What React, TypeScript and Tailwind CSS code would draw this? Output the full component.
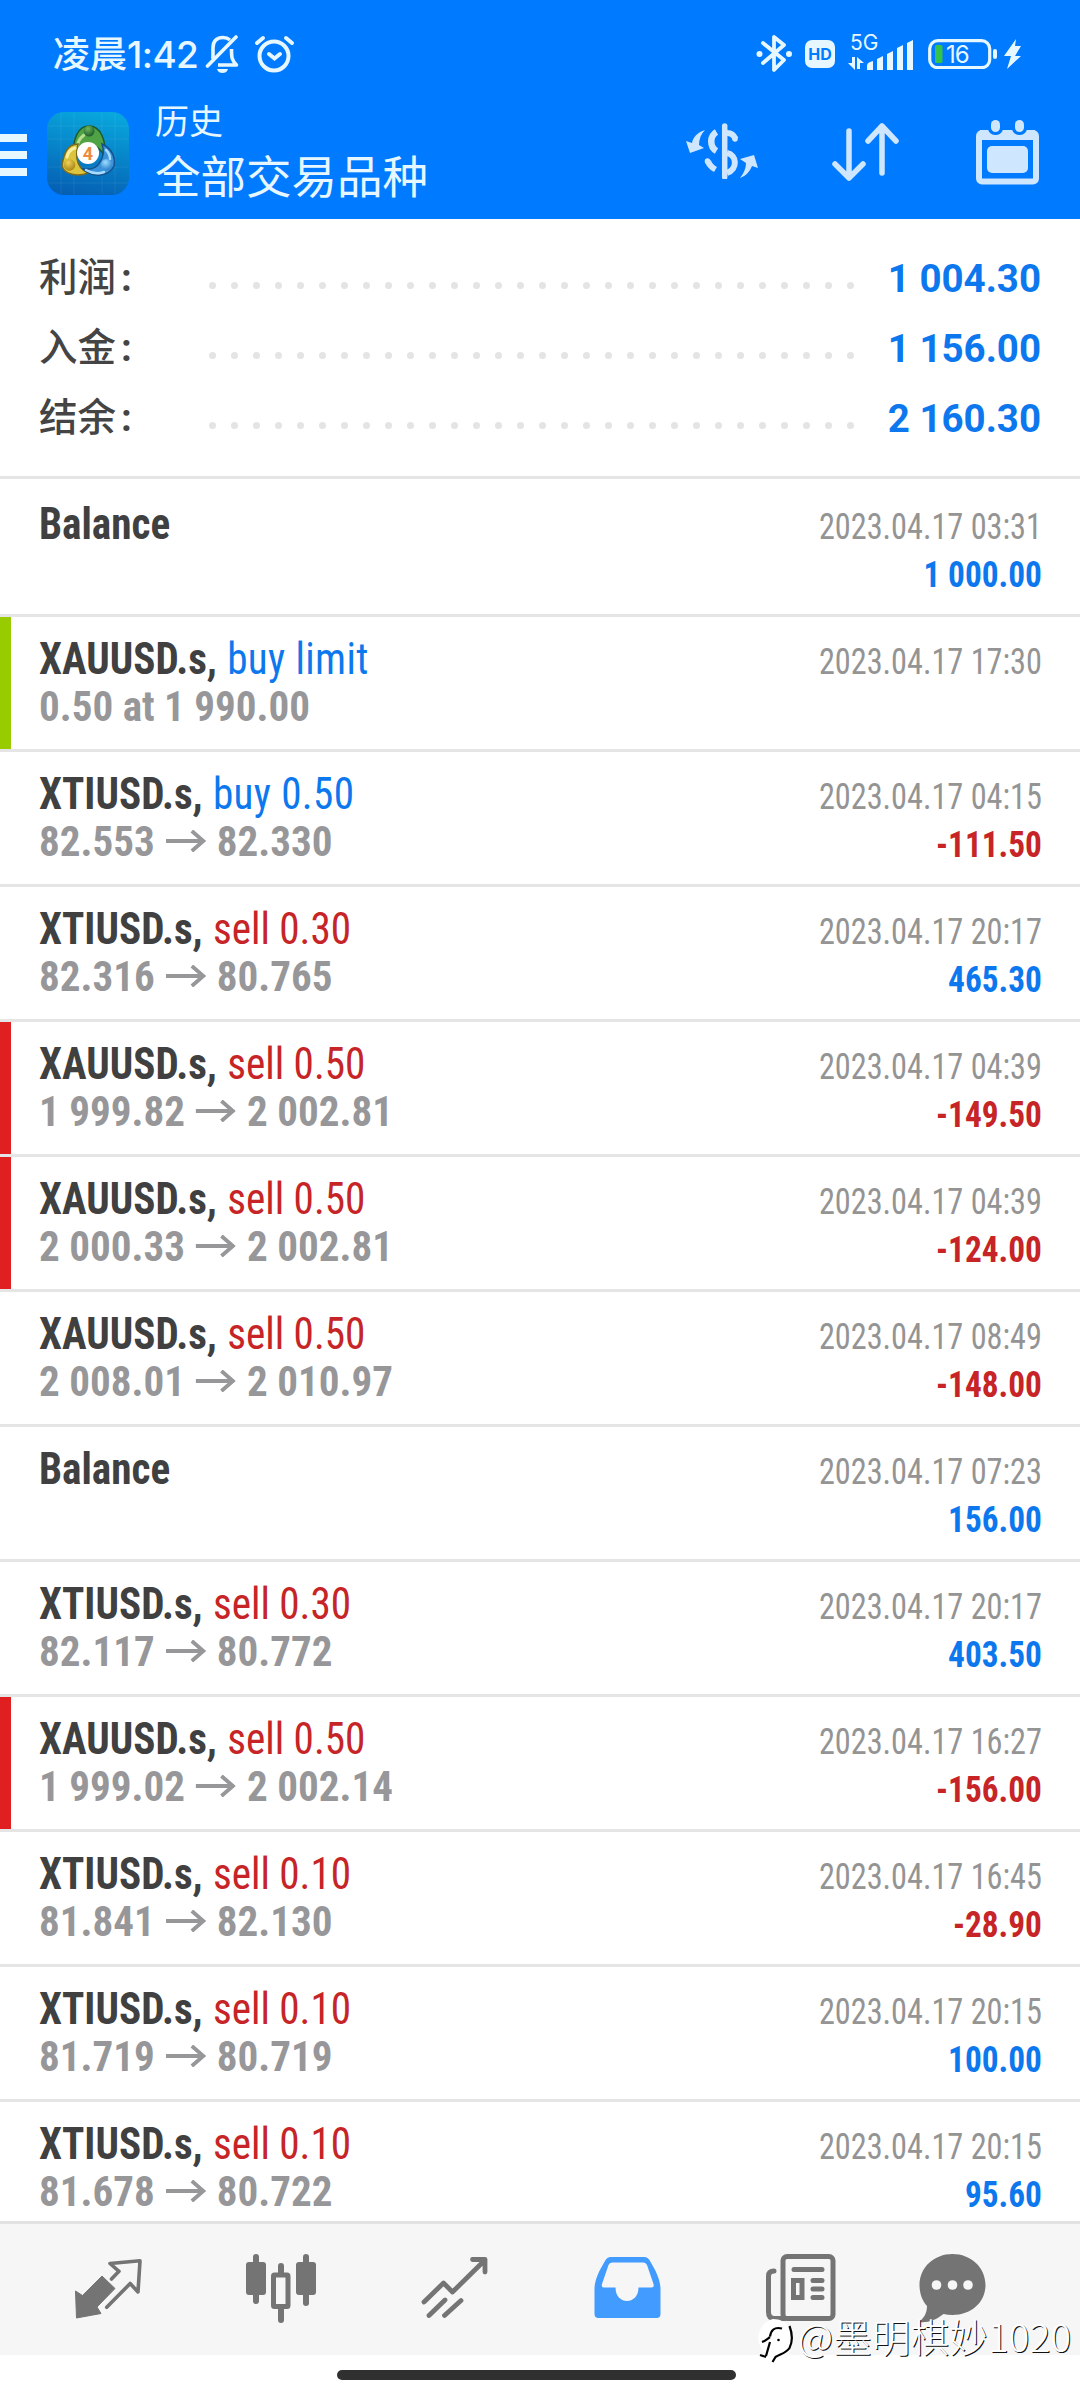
interface Deal {
  title: string;
  action?: string;
  side?: "buy" | "sell";
  detail?: string[];
  time: string;
  amount?: string;
  mark?: "tp" | "sl";
}

const summary = [
  { label: "利润", value: "1 004.30" },
  { label: "入金", value: "1 156.00" },
  { label: "结余", value: "2 160.30" },
];

const deals: Deal[] = [
  { title: "Balance", time: "2023.04.17 03:31", amount: "1 000.00" },
  { title: "XAUUSD.s,", action: "buy limit", side: "buy", detail: ["0.50 at 1 990.00"], time: "2023.04.17 17:30", mark: "tp" },
  { title: "XTIUSD.s,", action: "buy 0.50", side: "buy", detail: ["82.553", "82.330"], time: "2023.04.17 04:15", amount: "-111.50" },
  { title: "XTIUSD.s,", action: "sell 0.30", side: "sell", detail: ["82.316", "80.765"], time: "2023.04.17 20:17", amount: "465.30" },
  { title: "XAUUSD.s,", action: "sell 0.50", side: "sell", detail: ["1 999.82", "2 002.81"], time: "2023.04.17 04:39", amount: "-149.50", mark: "sl" },
  { title: "XAUUSD.s,", action: "sell 0.50", side: "sell", detail: ["2 000.33", "2 002.81"], time: "2023.04.17 04:39", amount: "-124.00", mark: "sl" },
  { title: "XAUUSD.s,", action: "sell 0.50", side: "sell", detail: ["2 008.01", "2 010.97"], time: "2023.04.17 08:49", amount: "-148.00" },
  { title: "Balance", time: "2023.04.17 07:23", amount: "156.00" },
  { title: "XTIUSD.s,", action: "sell 0.30", side: "sell", detail: ["82.117", "80.772"], time: "2023.04.17 20:17", amount: "403.50" },
  { title: "XAUUSD.s,", action: "sell 0.50", side: "sell", detail: ["1 999.02", "2 002.14"], time: "2023.04.17 16:27", amount: "-156.00", mark: "sl" },
  { title: "XTIUSD.s,", action: "sell 0.10", side: "sell", detail: ["81.841", "82.130"], time: "2023.04.17 16:45", amount: "-28.90" },
  { title: "XTIUSD.s,", action: "sell 0.10", side: "sell", detail: ["81.719", "80.719"], time: "2023.04.17 20:15", amount: "100.00" },
  { title: "XTIUSD.s,", action: "sell 0.10", side: "sell", detail: ["81.678", "80.722"], time: "2023.04.17 20:15", amount: "95.60" },
];

function StatusBar() {
  return (
    <div className="flex h-[108px] items-start pt-[33px] pl-[53px] text-[#e6f7ff]">
      <span className="mt-[-1px] w-[145px] text-[37px] leading-[40px] font-medium whitespace-nowrap">
        凌晨<span className="font-['Inter'] tracking-[-0.6px]">1:42</span>
      </span>
      <svg className="ml-[7px] h-[41px] w-[36px]" viewBox="0 0 36 41" fill="none" stroke="currentColor" strokeWidth="3.6">
        <path d="M2.500 33 31 4" strokeLinecap="round" />
        <path d="M8 26V15C8 8 12 4.500 18 4.500c3 0 5 .8 7 2.500M26.500 16c0 8 0 11 5 16H13" strokeLinejoin="round" />
        <path d="M12 36h11c-1 3-3 4-5.500 4S13 39 12 36Z" fill="currentColor" stroke="none" />
      </svg>
      <svg className="ml-[13px] h-[41px] w-[41px]" viewBox="0 0 41 41" fill="none" stroke="currentColor" strokeWidth="4" strokeLinecap="round">
        <circle cx="20" cy="23" r="14.500" />
        <path d="m15 21 5.500 4.500L26 21M3 10l6-5M38 10l-6-5" />
      </svg>
      <svg className="ml-[461px] h-[41px] w-[37px]" viewBox="0 0 37 41" fill="none" stroke="currentColor" strokeWidth="3.8" strokeLinejoin="round" strokeLinecap="round">
        <path d="M7 10l21 17-10 10V4l10 8L7 30" />
        <circle cx="3.500" cy="21" r="3" fill="currentColor" stroke="none" />
        <circle cx="33" cy="21" r="3" fill="currentColor" stroke="none" />
      </svg>
      <span className="mt-[7px] ml-[12px] flex h-[28px] w-[30px] items-center justify-center rounded-[7px] bg-[#e6f7ff] font-['Inter'] text-[16px] font-bold text-[#007aff]">
        HD
      </span>
      <div className="ml-[13px] flex w-[66px] flex-col">
        <span className="ml-[2px] h-[6px] font-['Inter'] text-[21px] leading-[34px]">
          <span className="block h-0 leading-[20px]">5G</span>
        </span>
        <svg className="h-[31px] w-[66px]" viewBox="0 0 66 31" fill="currentColor">
          <path d="M19 31v-4q0-3 3-4l3-1v9ZM29 31V20l6-3v14ZM39 31V15l6-3v19ZM49 31V9l6-3v25ZM59 31V4l6-3v30Z" />
          <path d="M4 18h3v13L0 24h4ZM9 30V18l7 6h-4v6Z" />
        </svg>
      </div>
      <svg className="mt-[6px] ml-[14px] h-[30px] w-[95px]" viewBox="0 0 95 30">
        <rect x="1.700" y="1.700" width="60" height="27" rx="8" fill="none" stroke="currentColor" strokeWidth="3.200" />
        <rect x="7" y="6" width="7.500" height="18" rx="1.500" fill="#35c24a" />
        <rect x="65" y="10" width="4" height="10" rx="2" fill="currentColor" />
        <text x="18" y="24" fontSize="24" fontFamily="Inter" fill="currentColor" letterSpacing="-1">16</text>
        <path d="M88 0 76 17h7l-4 13 14-13h-6l6-10h-6Z" fill="currentColor" />
      </svg>
    </div>
  );
}

function AppLogo() {
  return (
    <svg className="h-[83px] w-[82px]" viewBox="0 0 82 83">
      <defs>
        <linearGradient id="tile" x1="0.6" y1="0" x2="0.4" y2="1">
          <stop offset="0" stopColor="#08a6dc" />
          <stop offset="1" stopColor="#0560b4" />
        </linearGradient>
        <radialGradient id="greenHead" cx="0.4" cy="0.3" r="0.7">
          <stop offset="0" stopColor="#6fb65c" />
          <stop offset="1" stopColor="#1c5f2b" />
        </radialGradient>
        <radialGradient id="yellowHead" cx="0.4" cy="0.3" r="0.7">
          <stop offset="0" stopColor="#f0d45a" />
          <stop offset="1" stopColor="#a88414" />
        </radialGradient>
        <radialGradient id="blueHead" cx="0.4" cy="0.3" r="0.7">
          <stop offset="0" stopColor="#9edcff" />
          <stop offset="1" stopColor="#2e86cf" />
        </radialGradient>
      </defs>
      <rect width="82" height="83" rx="17" fill="url(#tile)" />
      <path d="M14 1v81M27 1v81M55 1v81M68 1v81M1 14h80M1 27h80M1 55h80M1 71h80" stroke="#fff" strokeOpacity=".07" />
      {/* three figures around the badge */}
      <path d="M27 43C25 28 31 14 42 14s18 14 15 30c-3-7-8-11-15-11s-12 4-15 10Z" fill="#4fa345" stroke="#1d5a2b" strokeWidth="1.5" />
      <path d="M30 37c0-7 3-11 7-14" fill="none" stroke="#b7dd8e" strokeWidth="3" strokeLinecap="round" />
      <path d="M31 32C20 32 17 42 15 53c1 10 17 12 26 8-7-3-10-8-11-14-1-5 0-10 1-15Z" fill="#dcc53c" stroke="#7a6a1c" strokeWidth="1.5" />
      <path d="M20 45c1-5 4-8 8-9" fill="none" stroke="#f8efa0" strokeWidth="3" strokeLinecap="round" />
      <path d="M55 32c9 4 14 13 12 22-5 10-20 13-31 3 8 1 14-1 17-7 4-6 4-12 2-18Z" fill="#3a92dc" stroke="#15518c" strokeWidth="1.5" />
      <path d="M39 58c7 4 13 4 18 2M59 38c3 3 4 6 4 9" fill="none" stroke="#a8dcff" strokeWidth="2.5" strokeLinecap="round" />
      <circle cx="42" cy="19" r="5.500" fill="url(#greenHead)" />
      <circle cx="22.500" cy="53" r="5.800" fill="url(#yellowHead)" />
      <circle cx="59.500" cy="52.500" r="5.500" fill="url(#blueHead)" />
      <circle cx="41" cy="41" r="11" fill="#fff" />
      <text x="41" y="47.500" fontSize="18" fontWeight="700" fontFamily="Roboto" textAnchor="middle" fill="#ee8a3c">4</text>
    </svg>
  );
}

function Toolbar() {
  return (
    <div className="flex h-[111px] text-[#cfe6ff]">
      <div className="mt-[26px] flex w-[27px] flex-col gap-[9px]">
        <span className="h-[8px] bg-[#e6f7ff]" />
        <span className="h-[8px] bg-[#e6f7ff]" />
        <span className="h-[8px] bg-[#e6f7ff]" />
      </div>
      <div className="mt-[4px] ml-[20px]">
        <AppLogo />
      </div>
      <div className="ml-[26px] w-[531px] text-[#e6f7ff]">
        <div className="mt-[-9px] text-[34px] leading-[42px]">历史</div>
        <div className="mt-[4px] text-[45.5px] leading-[58px]">全部交易品种</div>
      </div>
      <svg className="mt-[15px] h-[56px] w-[72px]" viewBox="0 0 72 56" fill="currentColor">
        <path d="M19 7C12 9 7 14 6 20l-6-2 4 12 14-5-5-3c0-6 2-11 6-15ZM54 55c6-2 10-7 12-12l6 2-4-13-14 4 6 4c0 5-2 10-6 15Z" />
        <g fill="none" stroke="currentColor">
          <path d="M38.700 3v51" strokeWidth="5.500" strokeLinecap="round" />
          <path d="M41 10c4 0 7 2 8.500 6M41 30c10 2 11 16 0 20M22 38c1 4 3 6 7.500 8.500" strokeWidth="6" />
          <path d="M30.500 9c-7 4-7 15 0 19" strokeWidth="6.500" />
          <path d="M49 15v1M21.500 38v.5" strokeWidth="5.500" strokeLinecap="round" />
        </g>
      </svg>
      <svg className="mt-[15px] ml-[74px] h-[59px] w-[67px]" viewBox="0 0 67 59" fill="none" stroke="currentColor" strokeWidth="5.5" strokeLinecap="round" strokeLinejoin="round">
        <path d="M17 8v47M3 41l14 14 14-14M50 50V3M36 18 50 3l14 15" />
      </svg>
      <svg className="mt-[12px] ml-[77px] h-[65px] w-[63px]" viewBox="0 0 63 65" fill="currentColor">
        <rect x="3" y="13" width="57" height="48.500" rx="3" fill="none" stroke="currentColor" strokeWidth="6" />
        <path d="M4 10h55v10H4Z" />
        <rect x="11" y="26" width="41" height="27" rx="5" />
        <rect x="12" y="-3" width="15" height="18" rx="7" fill="#007aff" />
        <rect x="36" y="-3" width="15" height="18" rx="7" fill="#007aff" />
        <rect x="15" y="0" width="9" height="12" rx="4.500" />
        <rect x="39" y="0" width="9" height="12" rx="4.500" />
      </svg>
    </div>
  );
}

function SummaryRow({ label, value }: { label: string; value: string }) {
  return (
    <div className="flex h-[70px] items-center">
      <span className="w-[170px] pb-[4px] text-[38.5px] font-medium text-[#444444]">
        {label}
        <span className="ml-[5px] font-['Roboto'] font-bold">:</span>
      </span>
      <div className="flex w-[645px] justify-between pt-[14px]">
        {Array.from({ length: 30 }, (_, i) => (
          <span key={i} className="h-[7px] w-[7px] rounded-full bg-[#e4e4e4]" />
        ))}
      </div>
      <span className="ml-auto pt-[2px] font-['Roboto'] text-[38.5px] font-bold text-[#0d78ee]">{value}</span>
    </div>
  );
}

function Arrow() {
  return (
    <svg className="mx-[11.5px] h-[22px] w-[42px]" viewBox="0 0 42 22" fill="none" stroke="currentColor" strokeWidth="4">
      <path d="M0 11h39M27 1l12 10-12 10" />
    </svg>
  );
}

function DealRow({ deal, first }: { deal: Deal; first: boolean }) {
  return (
    <div className={`flex border-b-[3px] border-[#e5e5e5] font-['Roboto_Condensed','Roboto'] ${first ? "h-[138px] pt-[3px]" : "h-[135px]"}`}>
      <div
        className={`w-[11px] ${deal.mark === "tp" ? "bg-[#99cc00]" : ""} ${deal.mark === "sl" ? "bg-[#e02020]" : ""}`}
      />
      <div className="flex flex-1 justify-between pt-[18px] pr-[38px] pl-[28px]">
        <div className="text-[44px] leading-[48px] font-bold">
          <div className="origin-left scale-x-[0.935] text-[#404040]">
            {deal.title}
            {deal.action && (
              <span
                className={`ml-[11px] font-normal ${deal.side === "buy" ? "tracking-[0.4px] text-[#0d78ee]" : "text-[#c62426]"}`}
              >
                {deal.action}
              </span>
            )}
          </div>
          {deal.detail && (
            <div className="mt-[-1px] flex origin-left scale-x-[0.955] items-center text-[43px] text-[#97979a]">
              {deal.detail[0]}
              {deal.detail[1] && <Arrow />}
              {deal.detail[1]}
            </div>
          )}
        </div>
        <div className="pt-[3px] text-right text-[36px] leading-[48px]">
          <div className="origin-right scale-x-[0.896] text-[#949494]">{deal.time}</div>
          {deal.amount && (
            <div
              className={`origin-right scale-x-[0.925] font-bold ${deal.amount.startsWith("-") ? "text-[#c62426]" : "text-[#0d78ee]"}`}
            >
              {deal.amount}
            </div>
          )}
        </div>
      </div>
    </div>
  );
}

function TabBar() {
  return (
    <div className="flex h-[134px] shrink-0 items-start border-t-[3px] border-[#e2e2e2] bg-[#f6f6f6] pt-[30px] pl-[75px] text-[#747474]">
      {/* quotes */}
      <svg className="mt-[4px] h-[62px] w-[68px]" viewBox="0 0 68 62">
        <path d="M27 18 40 30.500 22 49l4 6.500L1.500 60 .5 33l7 4.500Z" fill="currentColor" stroke="currentColor" strokeLinejoin="round" />
        <path d="M36.500 21 44 13.300 35 5.500l30-2.700-2 31.200-7.800-8.500L31.700 49.300" fill="none" stroke="currentColor" strokeWidth="3.6" strokeLinecap="round" strokeLinejoin="round" />
      </svg>
      {/* charts */}
      <svg className="ml-[103px] h-[70px] w-[70px]" viewBox="0 0 70 70" fill="currentColor">
        <rect y="8" width="20" height="33" rx="3" />
        <rect x="7" width="6" height="50" rx="3" />
        <rect x="50" y="8" width="20" height="33" rx="3" />
        <rect x="57" width="6" height="52" rx="3" />
        <rect x="27.500" y="21" width="14.500" height="31.500" rx="1" fill="none" stroke="currentColor" strokeWidth="5" />
        <path d="M35 12v8M35 54v12" stroke="currentColor" strokeWidth="6" strokeLinecap="round" />
      </svg>
      {/* trade */}
      <svg className="mt-[2px] ml-[105px] h-[63px] w-[68px]" viewBox="0 0 68 63" fill="none" stroke="currentColor" strokeWidth="4.8" strokeLinecap="round" strokeLinejoin="round">
        <path d="M3 46 22.500 27l9 9L64 4M51.500 3.500H64V16M24 44 8 59.500M40 44.500 23.500 59.500" />
      </svg>
      {/* history */}
      <svg className="mt-[2px] ml-[105px] h-[63px] w-[67px]" viewBox="0 0 67 63">
        <path
          d="M17 1h33q4 0 6 4c6 10 10 18 10.500 27v26q0 4-4 4H4.500q-4 0-4-4V32C1 23 5 15 11 5q2-4 6-4Z M18 6.500q-2.500 0-3.500 2.500L8 28q-1 3.500 2 3.500h11.500c0 18 23 18 23 0H57q3.500 0 2.500-3.500L53 9q-1-2.500-3.500-2.500Z"
          fill="#429bff"
          fillRule="evenodd"
        />
      </svg>
      {/* news */}
      <svg className="ml-[105px] h-[68px] w-[70px]" viewBox="0 0 70 68" fill="none" stroke="currentColor" strokeWidth="5" strokeLinecap="round">
        <rect x="17" y="2.500" width="50" height="62" rx="4" />
        <path d="M8 17c-4 0-5.500 2-5.500 5v36c0 4 2 6.500 6 6.500h10M28 15.500h28M47 26.500h9M47 35h9M47 43.500h9" />
        <rect x="27.500" y="26.500" width="8.500" height="17" />
      </svg>
      {/* messages */}
      <svg className="ml-[83px] h-[72px] w-[67px]" viewBox="0 0 67 72" fill="currentColor">
        <path d="M33.500 0C52 0 66.500 13.500 66.500 31S52 61 33.500 61c-3 0-6-.3-9-1C17 66 9 69 0 68c5-4 8-9 8-16C3 46.500.5 39 .5 31 .5 13.500 15 0 33.500 0Z" />
        <g fill="#f6f6f6">
          <circle cx="17.500" cy="31" r="4.800" />
          <circle cx="33.500" cy="31" r="4.800" />
          <circle cx="49" cy="31" r="4.800" />
        </g>
      </svg>
    </div>
  );
}

function Watermark() {
  return (
    <div className="absolute top-[2316px] left-[752px] flex items-start">
      <svg className="h-[50px] w-[46px]" viewBox="0 0 46 50">
        <path d="M21 3a20 20 0 0 1 18 29c-3 7-9 11-17 14v-5A19.500 19.500 0 0 1 21 3Z" fill="#fff" />
        <path d="M30 12.500c-8-2-11 2-12 8M18 21c-4 3-5 4-8 5M18 26l-4 14M8 39l6 2" fill="none" stroke="#000" strokeWidth="2.2" />
        <circle cx="26.500" cy="24" r="1.300" />
        <path d="M37.500 10c3 8 3 16 0 22-3 5-9 6-14 9l-3 5" fill="none" stroke="#000" strokeWidth="2.200" />
      </svg>
      <span className="mt-[-2px] text-[38.5px] leading-[42px] font-light tracking-[0.2px] whitespace-nowrap text-white [text-shadow:1px_1px_0.5px_#111]">
        @墨明棋妙1020
      </span>
    </div>
  );
}

export default function App() {
  return (
    <div className="relative flex h-[2400px] w-[1080px] flex-col overflow-hidden bg-white font-['Noto_Sans_CJK_SC',sans-serif]">
      <header className="h-[219px] shrink-0 bg-[#007aff]">
        <StatusBar />
        <Toolbar />
      </header>
      <div className="h-[260px] shrink-0 border-b-[3px] border-[#e5e5e5] pt-[24px] pr-[39px] pl-[39px]">
        {summary.map((row) => (
          <SummaryRow key={row.label} {...row} />
        ))}
      </div>
      <main className="h-[1742px] shrink-0 overflow-hidden">
        {deals.map((deal, i) => (
          <DealRow key={i} deal={deal} first={i === 0} />
        ))}
      </main>
      <TabBar />
      <div className="mt-[15px] ml-[337px] h-[10px] w-[399px] shrink-0 rounded-full bg-[#303030]" />
      <Watermark />
    </div>
  );
}
